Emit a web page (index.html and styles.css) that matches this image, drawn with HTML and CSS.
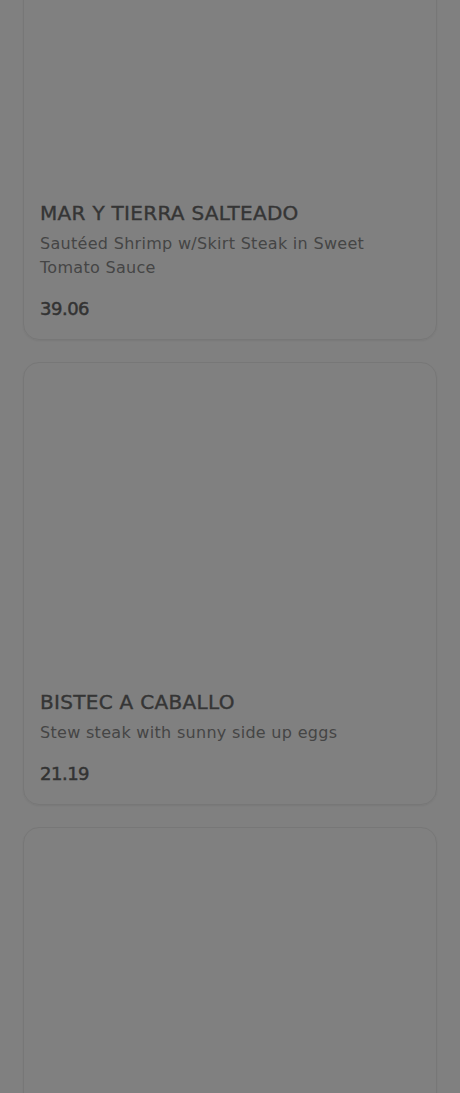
FILE: index.html
```html
<!DOCTYPE html>
<html lang="en">
<head>
  <meta charset="UTF-8">
  <meta name="viewport" content="width=device-width, initial-scale=1.0">
  <title>Menu</title>
  <link rel="stylesheet" href="styles.css">
</head>
<body>
  <div class="menu-list">
    <!-- Menu items -->
    <div class="dish-card">
      <div class="dish-image"></div>
      <div class="dish-body">
        <h3 class="dish-name">MAR Y TIERRA SALTEADO</h3>
        <p class="dish-desc">Sautéed Shrimp w/Skirt Steak in Sweet Tomato Sauce</p>
        <div class="dish-price">39.06</div>
      </div>
    </div>

    <div class="dish-card">
      <div class="dish-image"></div>
      <div class="dish-body">
        <h3 class="dish-name">BISTEC A CABALLO</h3>
        <p class="dish-desc">Stew steak with sunny side up eggs</p>
        <div class="dish-price">21.19</div>
      </div>
    </div>

    <!-- next item, only its picture is in view -->
    <div class="dish-card">
      <div class="dish-image"></div>
    </div>
  </div>
</body>
</html>
```

FILE: styles.css
```css
body {
  margin: 0;
  padding: 0;
  font-family: "DejaVu Sans", "Noto Sans", sans-serif;
  background-color: #808080; /* page under the modal backdrop */
  color: #3b3b3b;
  height: 100vh;
  overflow: hidden;
}

.menu-list {
  display: flex;
  flex-direction: column;
  gap: 22px;
  padding: 0 23px;
  margin-top: -127px; /* scrolled down the list */
}

.dish-card {
  border: 1px solid #777;
  border-radius: 16px;
  overflow: hidden;
  box-shadow: 0 1px 2px rgba(0, 0, 0, 0.06);
}

.dish-image {
  aspect-ratio: 4 / 3;
}

.dish-body {
  padding: 16px;
}

.dish-name {
  margin: 0;
  font-size: 20px;
  line-height: 28px;
  font-weight: 500;
  letter-spacing: 0.3px;
  color: #353535;
  -webkit-text-stroke: 0.4px #353535; /* medium weight */
}

.dish-desc {
  margin: 5px 0 0;
  font-size: 16px;
  line-height: 24px;
  color: #454545;
  letter-spacing: 0.3px;
}

.dish-price {
  margin-top: 15px;
  font-size: 18px;
  line-height: 28px;
  letter-spacing: -0.5px;
  color: #333;
  -webkit-text-stroke: 0.5px #333;
}
```
